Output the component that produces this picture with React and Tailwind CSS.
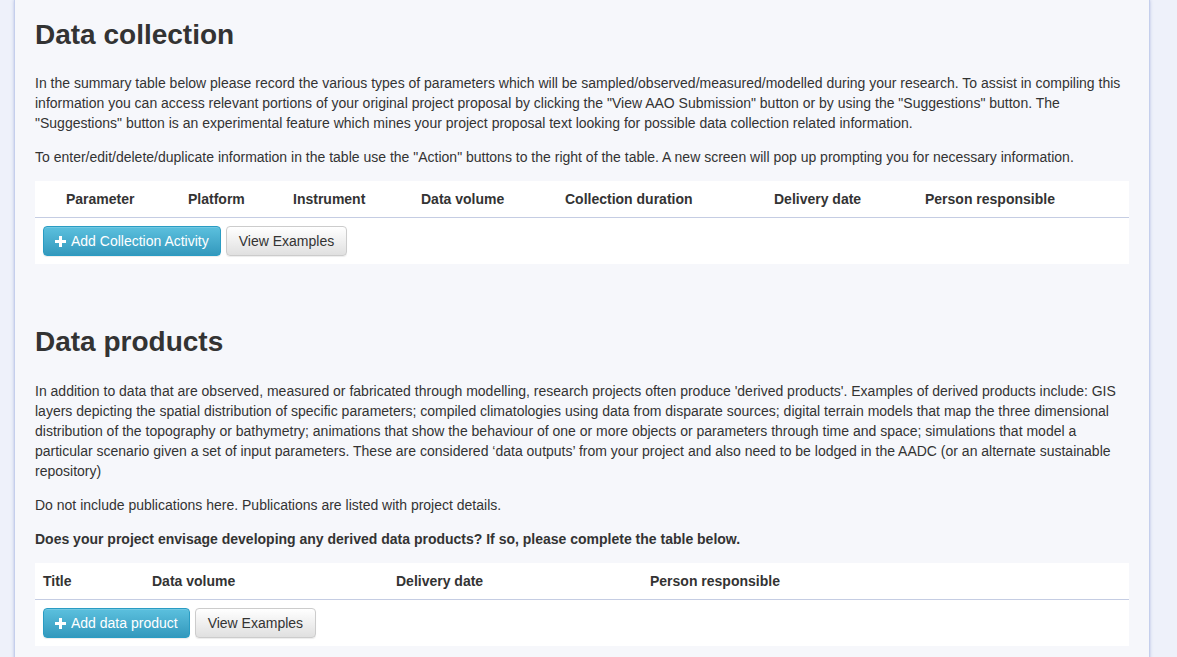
import React from "react";

function PlusIcon() {
  return (
    <svg width="11" height="11" viewBox="0 0 11 11" className="inline-block mr-[5px] -mt-[2px] align-middle">
      <rect x="4" y="0" width="3" height="11" fill="#fff" />
      <rect x="0" y="4" width="11" height="3" fill="#fff" />
    </svg>
  );
}

function Buttons({ addLabel }) {
  return (
    <div className="flex gap-[5px]">
      <button className="h-[30px] px-[11px] rounded-[4px] border border-[#2a9cc3] bg-gradient-to-b from-[#5bc0de] to-[#3399bd] text-white text-[14px] leading-[20px] shadow-[inset_0_1px_0_rgba(255,255,255,0.15),0_1px_1px_rgba(0,0,0,0.075)]">
        <PlusIcon />
        {addLabel}
      </button>
      <button className="h-[30px] px-[12px] rounded-[4px] border border-[#cccccc] bg-gradient-to-b from-[#ffffff] to-[#e0e0e0] text-[#333] text-[14px] leading-[20px] shadow-[inset_0_1px_0_rgba(255,255,255,0.15),0_1px_1px_rgba(0,0,0,0.075)]">
        View Examples
      </button>
    </div>
  );
}

export default function App() {
  return (
    <div
      className="min-h-[657px] bg-[#eef1fa] text-[#333] text-[14px] leading-[20px]"
      style={{ fontFamily: '"Liberation Sans", Arial, Helvetica, sans-serif' }}
    >
      <div className="ml-[14px] w-[1136px] min-h-[657px] bg-[#f6f7fb] border-x border-[#c5cfec] shadow-[0_0_3px_rgba(110,130,200,0.45)] px-[20px] pt-[18px] pb-[40px]">
        {/* Data collection */}
        <h2 className="text-[28px] leading-[33px] font-bold text-[#333] mb-[22px]">Data collection</h2>
        <p className="mb-[14px]">
          In the summary table below please record the various types of parameters which will be sampled/observed/measured/modelled during your research. To assist in compiling this information you can access relevant portions of your original project proposal by clicking the "View AAO Submission" button or by using the "Suggestions" button. The "Suggestions" button is an experimental feature which mines your project proposal text looking for possible data collection related information.
        </p>
        <p className="mb-[14px]">
          To enter/edit/delete/duplicate information in the table use the "Action" buttons to the right of the table. A new screen will pop up prompting you for necessary information.
        </p>
        <div className="bg-white">
          <div className="grid grid-cols-[23px_122px_105px_128px_144px_209px_151px_1fr] h-[37px] items-center font-bold border-b border-[#c5cde3]">
            <div></div>
            <div className="px-[8px]">Parameter</div>
            <div className="px-[8px]">Platform</div>
            <div className="px-[8px]">Instrument</div>
            <div className="px-[8px]">Data volume</div>
            <div className="px-[8px]">Collection duration</div>
            <div className="px-[8px]">Delivery date</div>
            <div className="px-[8px]">Person responsible</div>
          </div>
          <div className="p-[8px] h-[46px]">
            <Buttons addLabel="Add Collection Activity" />
          </div>
        </div>

        {/* Data products */}
        <h2 className="mt-[61px] text-[28px] leading-[33px] font-bold text-[#333] mb-[23px]">Data products</h2>
        <p className="mb-[14px]">
          In addition to data that are observed, measured or fabricated through modelling, research projects often produce 'derived products'. Examples of derived products include: GIS layers depicting the spatial distribution of specific parameters; compiled climatologies using data from disparate sources; digital terrain models that map the three dimensional distribution of the topography or bathymetry; animations that show the behaviour of one or more objects or parameters through time and space; simulations that model a particular scenario given a set of input parameters. These are considered ‘data outputs’ from your project and also need to be lodged in the AADC (or an alternate sustainable repository)
        </p>
        <p className="mb-[14px]">Do not include publications here. Publications are listed with project details.</p>
        <p className="mb-[14px] font-bold">
          Does your project envisage developing any derived data products? If so, please complete the table below.
        </p>
        <div className="bg-white">
          <div className="grid grid-cols-[109px_244px_254px_1fr] h-[37px] items-center font-bold border-b border-[#c5cde3]">
            <div className="px-[8px]">Title</div>
            <div className="px-[8px]">Data volume</div>
            <div className="px-[8px]">Delivery date</div>
            <div className="px-[8px]">Person responsible</div>
          </div>
          <div className="p-[8px] h-[46px]">
            <Buttons addLabel="Add data product" />
          </div>
        </div>
      </div>
    </div>
  );
}
